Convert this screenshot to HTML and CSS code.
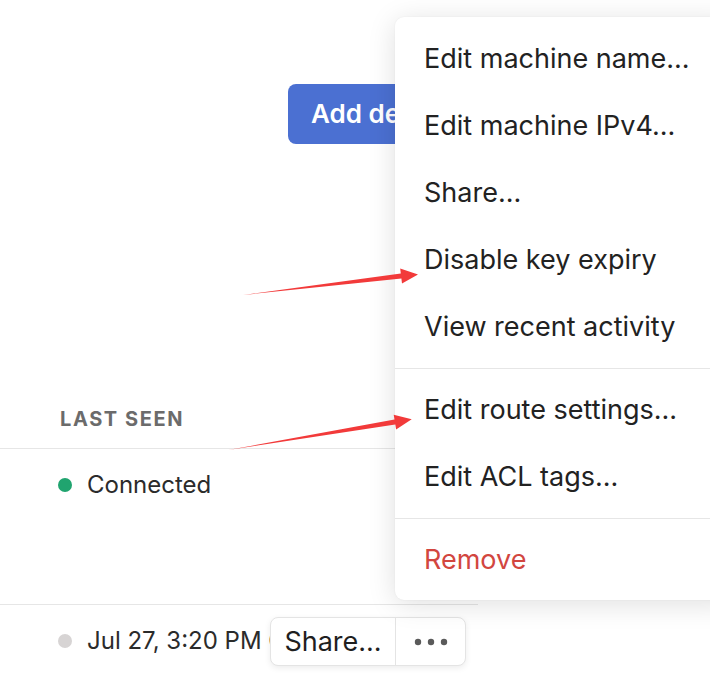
FILE: index.html
```html
<!doctype html>
<html>
<head>
<meta charset="utf-8">
<title>Machines</title>
<link rel="stylesheet" href="styles.css">
</head>
<body>
<div class="page">
	<div class="toolbar">
		<a href="javascript:;" class="btn-add">Add device</a>
	</div>
	<div class="table">
		<div class="thead">Last seen</div>
		<div class="row">
			<span class="dot on"></span>
			<span class="status">Connected</span>
		</div>
		<div class="row">
			<span class="dot"></span>
			<span class="status">Jul 27, 3:20 PM GMT+8</span>
		</div>
	</div>

	<div class="actions">
		<a href="javascript:;" class="share">Share...</a>
		<a href="javascript:;" class="more">
			<svg width="36" height="8" viewBox="0 0 36 8"><circle cx="5" cy="4" r="3.2"/><circle cx="18" cy="4" r="3.2"/><circle cx="31" cy="4" r="3.2"/></svg>
		</a>
	</div>

	<ul class="menu">
		<li>Edit machine name...</li>
		<li>Edit machine IPv4...</li>
		<li>Share...</li>
		<li>Disable key expiry</li>
		<li>View recent activity</li>
		<li class="sep"></li>
		<li>Edit route settings...</li>
		<li>Edit ACL tags...</li>
		<li class="sep"></li>
		<li class="danger">Remove</li>
	</ul>

	<svg class="marks" width="710" height="682" viewBox="0 0 710 682">
		<polygon points="243,295 401.4,278.5 402,283.4 418,274.5 400.2,268.6 400.8,273.5"/>
		<polygon points="228,450 395.3,424.6 396.1,429.5 411.7,419.3 393.7,414.7 394.5,419.6"/>
	</svg>
</div>
</body>
</html>
```

FILE: styles.css
```css
*{margin:0; padding:0; list-style:none; box-sizing:border-box;}
body{background:#fff; font-family:Inter, "Noto Sans", sans-serif; color:#222; overflow:hidden;}
.page{width:710px; height:682px; position:relative; overflow:hidden;}

.toolbar{display:flex; padding:84px 0 0 288px; height:144px;}
.btn-add{display:block; height:60px; padding:0 23px; line-height:60px; background:#4b70d2; color:#fff; font-size:26px; font-weight:600; border-radius:8px; text-decoration:none; white-space:nowrap;}

.table{width:478px;}
.thead{padding:263px 0 17px 60px; font-size:20px; font-weight:700; letter-spacing:1.6px; text-transform:uppercase; color:#6b6b6b; line-height:24px; border-bottom:1px solid #e6e6e6;}
.row{display:flex; align-items:center; gap:15px; padding:20px 0 0 58px; height:156px; align-items:flex-start; border-bottom:1px solid #e6e6e6; font-size:24px; line-height:32px; color:#2b2b2b;}
.row + .row{padding-top:20px;}
.dot{width:14px; height:14px; margin-top:9px; border-radius:50%; background:#d7d4d4; flex:none;}
.dot.on{background:#20a46f;}
.status{white-space:nowrap;}

.actions{position:absolute; left:270px; top:617px; width:196px; height:49px; display:flex; background:#fff; border:1px solid #e4e4e4; border-radius:8px; box-shadow:0 2px 6px rgba(0,0,0,0.08);}
.actions a{display:flex; align-items:center; justify-content:center; color:#1f1f1f; text-decoration:none;}
.share{width:125px; font-size:27px; border-right:1px solid #e4e4e4;}
.more{flex:1; fill:#5a5a5a;}

.menu{position:absolute; left:395px; top:17px; width:340px; padding:8px 0 7px; background:#fff; border-radius:9px; box-shadow:0 4px 28px rgba(0,0,0,0.13), 0 0 2px rgba(0,0,0,0.06);}
.menu li{height:67px; line-height:67px; padding-left:29px; font-size:27px; color:#222; white-space:nowrap;}
.menu li.sep{height:1px; margin:8px 0 7px; padding:0; background:#e6e6e6;}
.menu li.danger{color:#d2463f;}

.marks{position:absolute; left:0; top:0; pointer-events:none; fill:#f23a3a;}
```
